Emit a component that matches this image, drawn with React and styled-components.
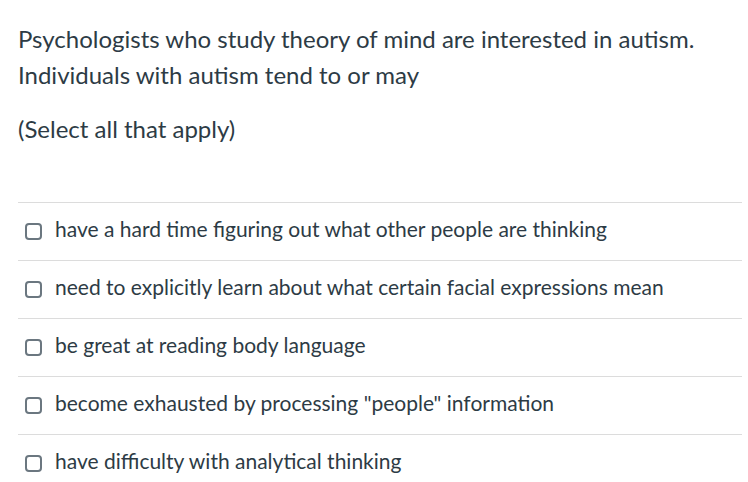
import React from 'react'
import styled, { createGlobalStyle } from 'styled-components'

const Global = createGlobalStyle`
  body {
    margin: 0;
    background: #fff;
    font-family: Lato, "Open Sans", sans-serif;
    color: #2d3b45;
  }
`

const Wrap = styled.div`
  padding: 21px 6px 0 18px;
`

const Question = styled.p`
  margin: 0;
  font-size: 24px;
  line-height: 36px;
`

const Hint = styled(Question)`
  margin-top: 18px;
`

const Answers = styled.div`
  margin-top: 55px;
  display: flex;
  flex-direction: column;
`

const Row = styled.label`
  display: flex;
  align-items: center;
  gap: 13px;
  box-sizing: border-box;
  height: 58px;
  padding: 0 0 7px 7px;
  border-top: 1px solid #dcdcdc;
  font-size: 21px;
`

const Box = styled.span`
  width: 17px;
  height: 17px;
  margin-top: 6px;
  box-sizing: border-box;
  border: 2px solid #6b7780;
  border-radius: 4px;
  flex-shrink: 0;
`

const options = [
  'have a hard time figuring out what other people are thinking',
  'need to explicitly learn about what certain facial expressions mean',
  'be great at reading body language',
  'become exhausted by processing "people" information',
  'have difficulty with analytical thinking',
]

function App() {
  return (
    <Wrap>
      <Global />
      <Question>
        Psychologists who study theory of mind are interested in autism.
        <br />
        Individuals with autism tend to or may
      </Question>
      <Hint>(Select all that apply)</Hint>
      <Answers>
        {options.map((o) => (
          <Row key={o}>
            <Box />
            {o}
          </Row>
        ))}
      </Answers>
    </Wrap>
  )
}

export default App
